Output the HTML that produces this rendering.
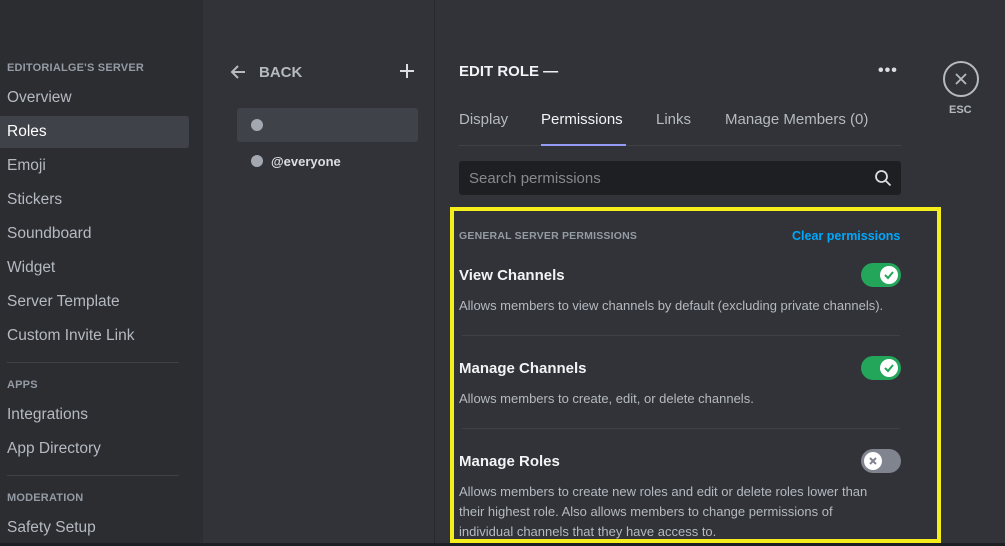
<!DOCTYPE html>
<html><head><meta charset="utf-8"><style>
*{margin:0;padding:0;box-sizing:border-box}
body{width:1005px;height:546px;overflow:hidden;background:#313338;font-family:"Liberation Sans",sans-serif;position:relative}
.a{position:absolute;white-space:nowrap}
.side{left:0;top:0;width:203px;height:546px;background:#2b2d31}
.hd{font-size:11px;font-weight:bold;color:#949ba4;letter-spacing:.2px}
.it{font-size:15.5px;color:#b5bac1;left:7px}
.sep{height:1px;background:#3f4147;left:7px;width:172px}
.mid{left:203px;top:0;width:232px;height:546px;background:#313338;border-right:1px solid #26282c}
.t{font-size:15px;color:#b5bac1}
.ttl{font-size:15px;font-weight:bold;color:#f2f3f5}
.desc{font-size:13px;color:#b5bac1;line-height:20px}
.tog{width:40px;height:24px;border-radius:12px}
.knob{position:absolute;top:3px;width:18px;height:18px;border-radius:50%;background:#fff}
</style></head><body>
<div class="a side"></div>
<div class="a hd" style="left:7px;top:62px">EDITORIALGE'S SERVER</div>
<div class="a" style="left:0;top:116px;width:189px;height:32px;background:#404249;border-radius:0 3px 3px 0"></div>
<div class="a it" style="top:89px">Overview</div>
<div class="a it" style="top:123px;color:#fff">Roles</div>
<div class="a it" style="top:157px">Emoji</div>
<div class="a it" style="top:191px">Stickers</div>
<div class="a it" style="top:225px">Soundboard</div>
<div class="a it" style="top:259px">Widget</div>
<div class="a it" style="top:293px">Server Template</div>
<div class="a it" style="top:327px">Custom Invite Link</div>
<div class="a sep" style="top:362px"></div>
<div class="a hd" style="left:7px;top:379px">APPS</div>
<div class="a it" style="top:406px">Integrations</div>
<div class="a it" style="top:440px">App Directory</div>
<div class="a sep" style="top:475px"></div>
<div class="a hd" style="left:7px;top:492px">MODERATION</div>
<div class="a it" style="top:519px">Safety Setup</div>

<div class="a mid"></div>
<svg class="a" style="left:229px;top:63px" width="18" height="18" viewBox="0 0 18 18"><path d="M16 9H3M9 3L3 9l6 6" stroke="#b5bac1" stroke-width="2" fill="none"/></svg>
<div class="a" style="left:259px;top:64px;font-size:15px;font-weight:bold;color:#b5bac1">BACK</div>
<svg class="a" style="left:399px;top:63px" width="16" height="16"><path d="M8 1v14M1 8h14" stroke="#dbdee1" stroke-width="2"/></svg>
<div class="a" style="left:237px;top:108px;width:181px;height:34px;background:#404249;border-radius:3px"></div>
<div class="a" style="left:251px;top:119px;width:12px;height:12px;border-radius:50%;background:#a4a8b0"></div>
<div class="a" style="left:251px;top:155px;width:12px;height:12px;border-radius:50%;background:#a4a8b0"></div>
<div class="a" style="left:271px;top:154px;font-size:13px;font-weight:bold;color:#dbdee1">@everyone</div>

<div class="a" style="left:459px;top:63px;font-size:15px;font-weight:bold;color:#f2f3f5">EDIT ROLE —</div>
<div class="a" style="left:878px;top:62px;font-size:16px;font-weight:bold;color:#dbdee1;letter-spacing:1px">•••</div>
<div class="a" style="left:943px;top:61px;width:36px;height:36px;border:2px solid #b5bac1;border-radius:50%"></div>
<svg class="a" style="left:954px;top:72px" width="14" height="14"><path d="M2 2l10 10M12 2L2 12" stroke="#b5bac1" stroke-width="1.8"/></svg>
<div class="a" style="left:949px;top:104px;font-size:11px;font-weight:bold;color:#b5bac1">ESC</div>

<div class="a t" style="left:459px;top:111px">Display</div>
<div class="a t" style="left:541px;top:111px;color:#f2f3f5">Permissions</div>
<div class="a t" style="left:656px;top:111px">Links</div>
<div class="a t" style="left:725px;top:111px">Manage Members (0)</div>
<div class="a" style="left:459px;top:145px;width:442px;height:1px;background:#3f4147"></div>
<div class="a" style="left:541px;top:144px;width:85px;height:2px;background:#949cf7"></div>
<div class="a" style="left:459px;top:161px;width:442px;height:34px;background:#1e1f22;border-radius:3px"></div>
<div class="a" style="left:469px;top:170px;font-size:15px;color:#87898c">Search permissions</div>
<svg class="a" style="left:874px;top:169px" width="18" height="18"><circle cx="7.5" cy="7.5" r="5.5" stroke="#dbdee1" stroke-width="1.8" fill="none"/><path d="M11.5 11.5l5 5" stroke="#dbdee1" stroke-width="1.8"/></svg>

<div class="a" style="left:450px;top:207px;width:491px;height:336px;border:4px solid #f5ee1c"></div>
<div class="a hd" style="left:459px;top:230px;font-size:10.5px">GENERAL SERVER PERMISSIONS</div>
<div class="a" style="left:792px;top:229px;font-size:12.5px;font-weight:bold;color:#00a8fc">Clear permissions</div>

<div class="a ttl" style="left:459px;top:267px">View Channels</div>
<div class="a tog" style="left:861px;top:263px;background:#23a55a"><div class="knob" style="left:19px"></div><svg class="a" style="left:22px;top:7px" width="12" height="10"><path d="M2 5l3 3 5-6" stroke="#23a55a" stroke-width="2" fill="none"/></svg></div>
<div class="a desc" style="left:459px;top:296px">Allows members to view channels by default (excluding private channels).</div>
<div class="a" style="left:462px;top:335px;width:438px;height:1px;background:#3f4147"></div>

<div class="a ttl" style="left:459px;top:360px">Manage Channels</div>
<div class="a tog" style="left:861px;top:356px;background:#23a55a"><div class="knob" style="left:19px"></div><svg class="a" style="left:22px;top:7px" width="12" height="10"><path d="M2 5l3 3 5-6" stroke="#23a55a" stroke-width="2" fill="none"/></svg></div>
<div class="a desc" style="left:459px;top:389px">Allows members to create, edit, or delete channels.</div>
<div class="a" style="left:462px;top:428px;width:438px;height:1px;background:#3f4147"></div>

<div class="a ttl" style="left:459px;top:453px">Manage Roles</div>
<div class="a tog" style="left:861px;top:449px;background:#80848e"><div class="knob" style="left:3px"></div><svg class="a" style="left:7px;top:7px" width="10" height="10"><path d="M2 2l6 6M8 2L2 8" stroke="#80848e" stroke-width="2"/></svg></div>
<div class="a desc" style="left:459px;top:482px">Allows members to create new roles and edit or delete roles lower than<br>their highest role. Also allows members to change permissions of<br>individual channels that they have access to.</div>
<div class="a" style="left:0;top:543px;width:1005px;height:3px;background:#1e1f22"></div>
</body></html>
